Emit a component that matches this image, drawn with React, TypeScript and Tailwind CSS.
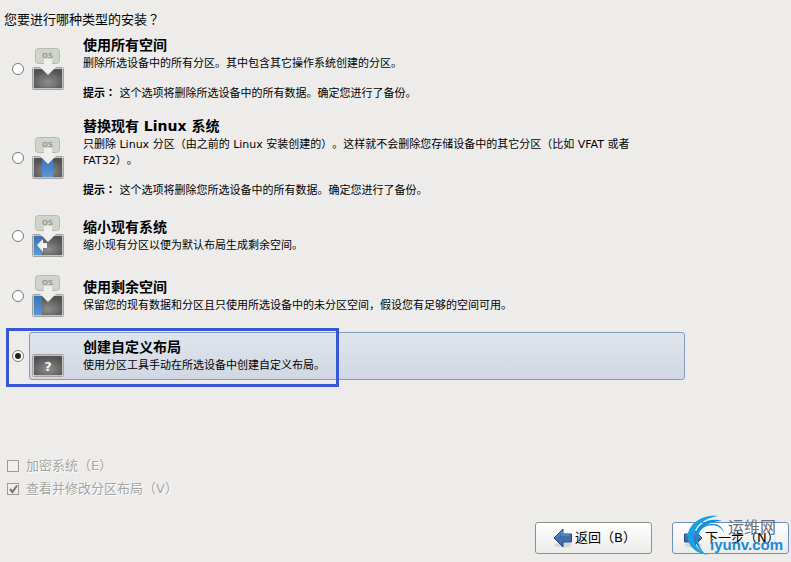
import { useState, type ReactNode } from 'react';

type Kind = 'all' | 'replace' | 'shrink' | 'free' | 'custom';

type Option = {
  kind: Kind;
  title: string;
  text: string;
  hint?: string;
  rowClass: string;
};

const options: Option[] = [
  {
    kind: 'all',
    title: '使用所有空间',
    text: '删除所选设备中的所有分区。其中包含其它操作系统创建的分区。',
    hint: '这个选项将删除所选设备中的所有数据。确定您进行了备份。',
    rowClass: 'mt-0',
  },
  {
    kind: 'replace',
    title: '替换现有 Linux 系统',
    text: '只删除 Linux 分区（由之前的 Linux 安装创建的）。这样就不会删除您存储设备中的其它分区（比如 VFAT 或者 FAT32）。',
    hint: '这个选项将删除您所选设备中的所有数据。确定您进行了备份。',
    rowClass: 'mt-1',
  },
  {
    kind: 'shrink',
    title: '缩小现有系统',
    text: '缩小现有分区以便为默认布局生成剩余空间。',
    rowClass: 'mt-2',
  },
  {
    kind: 'free',
    title: '使用剩余空间',
    text: '保留您的现有数据和分区且只使用所选设备中的未分区空间，假设您有足够的空间可用。',
    rowClass: 'mt-3',
  },
  {
    kind: 'custom',
    title: '创建自定义布局',
    text: '使用分区工具手动在所选设备中创建自定义布局。',
    rowClass: 'mt-3',
  },
];

function DiskIcon({ kind }: { kind: Kind }) {
  const shade = `shade-${kind}`;
  const blue = `blue-${kind}`;
  return (
    <svg width="34" height="44" viewBox="0 0 34 44" className="shrink-0" aria-hidden="true">
      <defs>
        <radialGradient id={shade} cx="0.5" cy="0.7" r="0.65">
          <stop offset="0" stopColor="#8e8e8e" />
          <stop offset="1" stopColor="#525252" />
        </radialGradient>
        <linearGradient id={blue} x1="0" y1="0" x2="0" y2="1">
          <stop offset="0" stopColor="#3a72b6" />
          <stop offset="1" stopColor="#5a96d8" />
        </linearGradient>
      </defs>
      {kind !== 'custom' && (
        <>
          <rect x="4.500" y="1.500" width="24" height="15" rx="3" fill="#d0d5cc" stroke="#b5bab1" />
          <text
            x="16.500"
            y="11"
            textAnchor="middle"
            fontSize="7"
            fontWeight="bold"
            fontFamily="DejaVu Sans, sans-serif"
            fill="#969b93"
          >
            OS
          </text>
        </>
      )}
      <rect x="1.500" y="20.500" width="31" height="22" rx="1" fill="#e9e9e7" stroke="#a3a39f" />
      <rect x="3" y="22" width="28" height="19" fill={`url(#${shade})`} stroke="#575757" strokeWidth="0.500" />
      {kind === 'replace' && <rect x="11" y="22" width="11" height="19" fill={`url(#${blue})`} />}
      {(kind === 'shrink' || kind === 'free') && (
        <rect x="3" y="22" width="8" height="19" fill={`url(#${blue})`} />
      )}
      {kind !== 'custom' && <path d="M13 12h8v8h4l-8 8-8-8h4z" fill="#eff0ed" />}
      {kind === 'shrink' && <path d="M6 31l6-6v4h4v5h-4v4z" fill="#f2f2f0" />}
      {kind === 'custom' && (
        <text
          x="17"
          y="37"
          textAnchor="middle"
          fontSize="13"
          fontWeight="bold"
          fontFamily="DejaVu Sans, sans-serif"
          fill="#f4f4f4"
        >
          ?
        </text>
      )}
    </svg>
  );
}

function Arrow({ back }: { back?: boolean }) {
  return (
    <svg width="20" height="20" viewBox="0 0 20 20" className="shrink-0" aria-hidden="true">
      <ellipse cx="10" cy="17" rx="9" ry="2.500" fill="#000" opacity="0.1" />
      <path
        d={back ? 'M1 10L10 1v5h8.500v8H10v5z' : 'M19 10L10 1v5H1.500v8H10v5z'}
        fill="#3f6fae"
        stroke="#204a87"
        strokeLinejoin="round"
      />
      <path
        d={back ? 'M2.500 10L9 3.500V7h8.500' : 'M2.500 7H11V3.500l6.500 6.500'}
        fill="none"
        stroke="#7fa3d1"
        strokeWidth="0.800"
      />
    </svg>
  );
}

function NavButton({ back, children }: { back?: boolean; children: ReactNode }) {
  return (
    <button
      type="button"
      className={`flex h-8 w-[117px] items-center gap-[2px] rounded-[3px] border bg-linear-to-b from-white to-[#ebebea] text-[13px] leading-5 whitespace-nowrap text-black ${
        back ? 'border-[#8f8f8b] pl-[17px]' : 'border-[#6d8fbd] pl-[10px]'
      }`}
    >
      <Arrow back={back} />
      {children}
    </button>
  );
}

function Watermark() {
  return (
    <div className="pointer-events-none absolute right-[2px] -bottom-[3px] h-[42px] w-[102px]">
      <svg width="42" height="42" viewBox="0 0 42 42" className="absolute top-0 left-0" aria-hidden="true">
        <path
          d="M31 1C18-1 4 6 1 18c-2 11 6 21 21 22C11 36 5 28 7 19 9 9 19 3 31 1z"
          fill="#1ba0e6"
        />
        <path d="M35 6C22 2 10 9 8 20c0 8 3 14 9 18-5-6-7-12-6-18C14 12 24 6 35 6z" fill="#1390dc" />
        <path d="M37 18C35 8 24 5 14 14 23 8 33 9 37 18z" fill="#1c8ad8" />
      </svg>
      <span className="absolute top-[3px] left-[41px] text-[16px] leading-5 text-[#6f7073]">运维网</span>
      <span className="absolute top-[18px] left-[23px] font-['Liberation_Sans',sans-serif] text-[15px] leading-6 font-bold text-[#168ae0]">
        iyunv.com
      </span>
    </div>
  );
}

export default function App() {
  const [selected, setSelected] = useState<Kind>('custom');

  return (
    <main className="min-h-screen bg-[#edeceb] pt-[9px] pb-2 font-['DejaVu_Sans','Noto_Sans_CJK_SC',sans-serif] text-black [text-spacing-trim:space-all]">
      <form>
        <fieldset>
          <legend className="pl-1 text-[13px] leading-5">
            您要进行哪种类型的安装<span className="font-['Noto_Sans_CJK_TC']">？</span>
          </legend>
          {options.map((o) => {
            const active = o.kind === selected;
            return (
              <div key={o.kind} className={`relative mr-[106px] flex items-center pl-3 ${o.rowClass}`}>
                <input
                  type="radio"
                  name="layout"
                  id={o.kind}
                  checked={active}
                  onChange={() => setSelected(o.kind)}
                  className="mr-[5px] grid size-3 shrink-0 appearance-none place-items-center rounded-full border border-[#777773] bg-white before:size-1.5 before:rounded-full before:bg-transparent checked:before:bg-[#222]"
                />
                <label
                  htmlFor={o.kind}
                  className={`flex flex-1 items-center gap-[18px] rounded-[3px] border pr-6 pl-px ${
                    active
                      ? 'border-[#839bbd] bg-linear-to-b from-[#e0e4ec] to-[#d1d8e3]'
                      : 'border-transparent'
                  }`}
                >
                  <DiskIcon kind={o.kind} />
                  <span className={`block pt-1 ${o.hint ? 'pb-1' : 'pb-[5px]'}`}>
                    <span className="block text-[14px] leading-5 font-bold">{o.title}</span>
                    <span className="mt-px block text-[11px] leading-4">{o.text}</span>
                    {o.hint && (
                      <span className="mt-3 block text-[11px] leading-4">
                        <b>
                          提示<span className="font-['Noto_Sans_CJK_TC']">：</span>
                        </b>{' '}
                        {o.hint}
                      </span>
                    )}
                  </span>
                </label>
                {active && (
                  <span className="pointer-events-none absolute -top-1 -bottom-[7px] left-1.5 w-[333px] border-3 border-[#3659d3]" />
                )}
              </div>
            );
          })}
        </fieldset>

        <div className="mt-[76px] flex flex-col gap-[3px] pl-[7px] text-[13px] leading-5 text-[#a5a4a1] [text-shadow:1px_1px_0_#fff]">
          <label className="flex items-center gap-[7px]">
            <input
              type="checkbox"
              disabled
              className="size-3 shrink-0 appearance-none border border-[#9c9b98] bg-[#f0efee]"
            />
            加密系统（E）
          </label>
          <label className="flex items-center gap-[7px]">
            <span className="relative size-3 shrink-0">
              <input
                type="checkbox"
                disabled
                defaultChecked
                className="block size-3 appearance-none border border-[#9c9b98] bg-[#f0efee]"
              />
              <svg width="12" height="12" viewBox="0 0 12 12" className="absolute inset-0" aria-hidden="true">
                <path d="M3 6l2.500 3L10 2.500" fill="none" stroke="#757472" strokeWidth="2" />
              </svg>
            </span>
            查看并修改分区布局（V）
          </label>
        </div>

        <div className="relative mt-[23px] flex justify-end gap-5 pr-[2px]">
          <NavButton back>返回（B）</NavButton>
          <NavButton>下一步（N）</NavButton>
          <Watermark />
        </div>
      </form>
    </main>
  );
}
